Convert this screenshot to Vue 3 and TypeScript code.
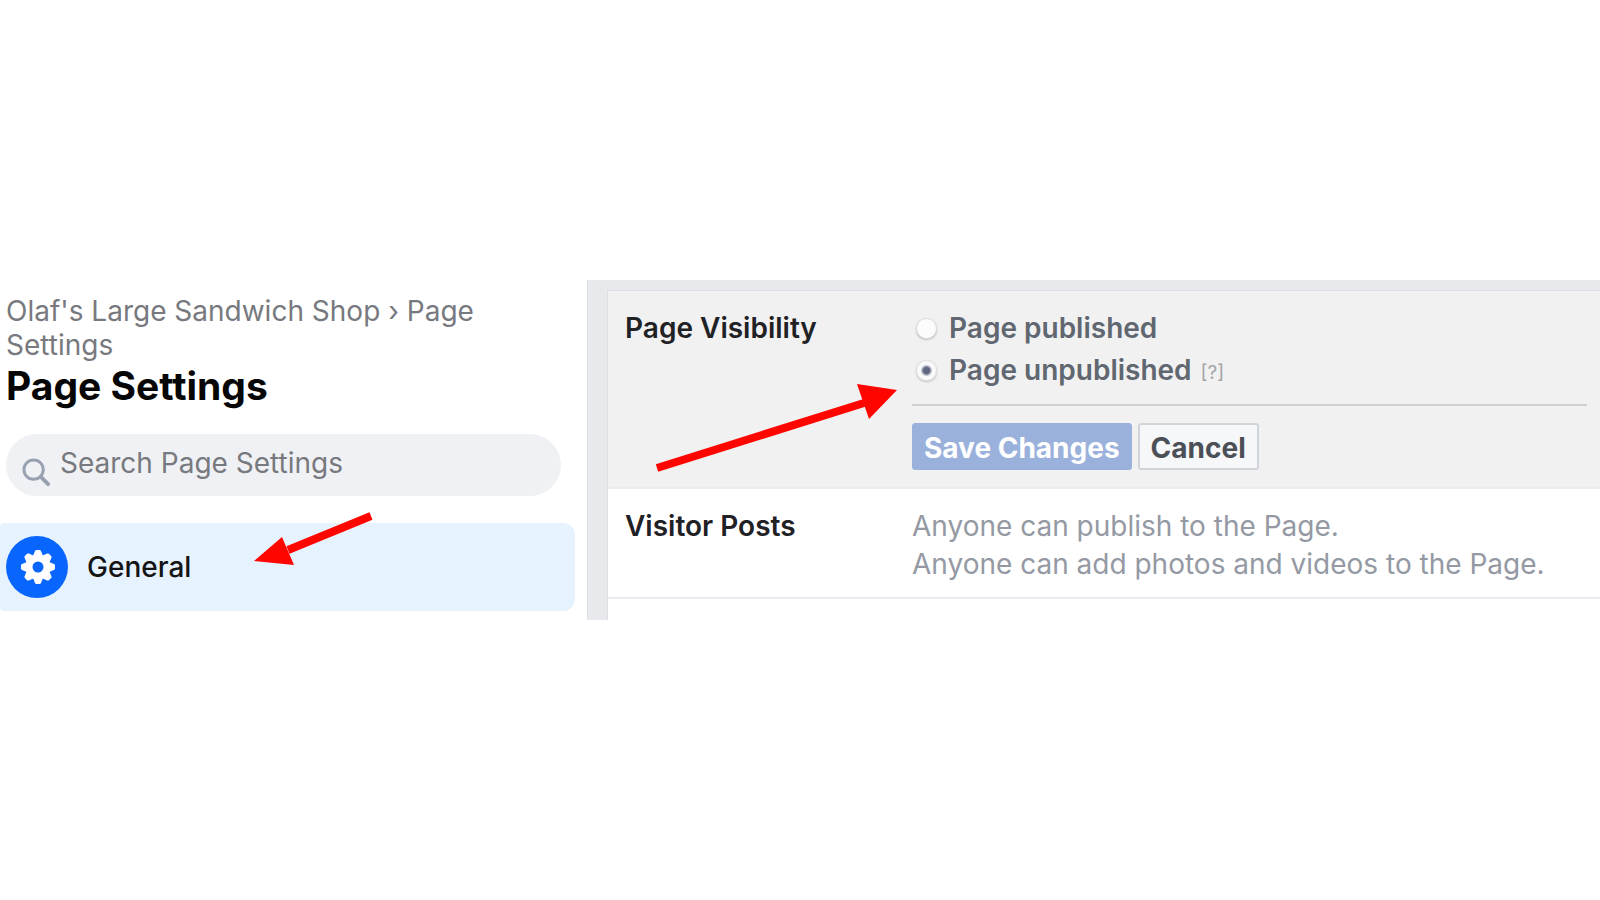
<script setup lang="ts">
import { ref } from 'vue'

type Visibility = 'published' | 'unpublished'

const visibility = ref<Visibility>('unpublished')
const query = ref('')
const options: { value: Visibility; label: string; help: boolean }[] = [
  { value: 'published', label: 'Page published', help: false },
  { value: 'unpublished', label: 'Page unpublished', help: true },
]
const visitorRules = [
  'Anyone can publish to the Page.',
  'Anyone can add photos and videos to the Page.',
]
</script>

<template>
  <div class="page">
    <div class="layout">
      <aside class="sidebar">
        <div class="crumbs">Olaf's Large Sandwich Shop › Page Settings</div>
        <h1 class="title">Page Settings</h1>
        <label class="search">
          <svg class="search-icon" viewBox="0 0 30 30" aria-hidden="true">
            <circle cx="12" cy="12" r="10" />
            <path d="M19.5 19.5 27 27" stroke-width="4" />
          </svg>
          <input v-model="query" type="search" placeholder="Search Page Settings" aria-label="Search Page Settings" />
        </label>
        <a class="nav-item" href="#general">
          <svg class="gear" viewBox="0 0 62 62" aria-hidden="true">
            <circle cx="31" cy="31" r="31" fill="#0866ff" />
            <g fill="#fff" transform="translate(32 31)">
              <circle r="12.5" />
              <path
                v-for="n in 8"
                :key="n"
                :transform="`rotate(${n * 45})`"
                d="M-5-11-3-16Q-2.600-17-1.600-17H1.600Q2.600-17 3-16L5-11Z"
              />
            </g>
            <circle cx="32" cy="31" r="5.500" fill="#0866ff" />
          </svg>
          <span>General</span>
          <svg class="arrow arrow-general" viewBox="0 0 124 56" aria-hidden="true">
            <path d="M117 2 34 36" />
            <polygon points="0,47 28,23 40,51" />
          </svg>
        </a>
      </aside>

      <main class="content">
        <div class="card">
          <section class="row editing">
            <h2 class="name">Page Visibility</h2>
            <form class="value" @submit.prevent>
              <div v-for="o in options" :key="o.value" class="option">
                <label class="choice">
                  <input v-model="visibility" type="radio" name="visibility" :value="o.value" />
                  <span>{{ o.label }}</span>
                </label>
                <a v-if="o.help" class="help" href="#help">[?]</a>
              </div>
              <div class="actions">
                <button class="btn save" type="submit">Save Changes</button>
                <button class="btn cancel" type="button">Cancel</button>
              </div>
            </form>
            <svg class="arrow arrow-visibility" viewBox="0 0 244 90" aria-hidden="true">
              <path d="M1 82 208 17" />
              <polygon points="241,4 201,-2 213,33" />
            </svg>
          </section>
          <section class="row posts">
            <h2 class="name">Visitor Posts</h2>
            <div class="value rules">
              <p v-for="rule in visitorRules" :key="rule">{{ rule }}</p>
            </div>
          </section>
        </div>
      </main>
    </div>
  </div>
</template>

<style>
body {
  margin: 0;
  background: #fff;
}
</style>

<style scoped>
.page {
  min-height: 100vh;
  display: flex;
  flex-direction: column;
  justify-content: center;
  font-family: Inter, "Liberation Sans", sans-serif;
}
.layout {
  display: grid;
  grid-template-columns: 587fr 1013fr;
}
.sidebar {
  padding: 14px 12px 0 0;
}
.crumbs {
  padding: 0 60px 0 6px;
  font-size: 28px;
  line-height: 34px;
  color: #77797e;
}
.title {
  margin: 0;
  padding-left: 6px;
  font-size: 39px;
  line-height: 48px;
  font-weight: 700;
  color: #060606;
}
.search {
  display: flex;
  align-items: center;
  gap: 9px;
  height: 62px;
  box-sizing: border-box;
  margin: 24px 14px 27px 6px;
  padding: 0 16px;
  border-radius: 31px;
  background: #f0f1f4;
}
.search-icon {
  flex: none;
  width: 29px;
  height: 29px;
  margin-top: 14px;
  fill: none;
  stroke: #98a1b1;
  stroke-width: 3;
  stroke-linecap: round;
}
.search input {
  flex: 1;
  min-width: 0;
  padding: 0 0 4px;
  border: 0;
  outline: 0;
  background: transparent;
  font: inherit;
  font-size: 28px;
  line-height: 34px;
  color: #1c1e21;
}
.search input::placeholder {
  color: #77797e;
  opacity: 1;
}
.nav-item {
  position: relative;
  display: flex;
  align-items: center;
  gap: 19px;
  height: 88px;
  padding-left: 6px;
  border-radius: 4px 12px 12px 4px;
  background: #e7f2ff;
  color: #141414;
  font-size: 28px;
  font-weight: 500;
  text-decoration: none;
}
.gear {
  width: 62px;
  height: 62px;
}
.arrow {
  position: absolute;
  overflow: visible;
  fill: #ff0500;
}
.arrow path {
  fill: none;
  stroke: #ff0500;
  stroke-width: 8;
}
.arrow-general {
  left: 254px;
  top: -9px;
  width: 124px;
  height: 56px;
}
.arrow-visibility {
  left: 48px;
  top: 95px;
  width: 244px;
  height: 90px;
}
.content {
  padding: 10px 0 0 19px;
  border-left: 1px solid #dcdfe3;
  background: #e7e9ed;
}
.card {
  padding-bottom: 21px;
  border: 1px solid #dddfe3;
  border-width: 1px 0 0 1px;
  background: #fff;
}
.row {
  position: relative;
  display: grid;
  grid-template-columns: 287px minmax(0, 1fr);
  padding: 0 13px 0 17px;
  border-bottom: 2px solid #e9edf1;
}
.editing {
  padding-top: 16px;
  padding-bottom: 17px;
  background: #f1f1f1;
}
.posts {
  padding-top: 18px;
  padding-bottom: 14px;
}
.name {
  margin: 0;
  font-size: 28px;
  line-height: 42px;
  font-weight: 600;
  color: #1f2125;
}
.option {
  display: flex;
  align-items: center;
  gap: 9px;
  height: 42px;
}
.choice {
  display: flex;
  align-items: center;
  gap: 12px;
  padding-left: 4px;
  font-size: 28px;
  line-height: 42px;
  font-weight: 600;
  color: #606770;
}
.choice input {
  appearance: none;
  width: 21px;
  height: 21px;
  margin: 0;
  border: 1px solid #dcdddf;
  border-radius: 50%;
  background: #fcfcfc;
  box-shadow: 0 1px 2px #bbbdc0;
}
.choice input:checked {
  background: radial-gradient(circle, #5f6680 0 3px, #fafafa 6px);
}
.help {
  padding-top: 4px;
  font-size: 19px;
  color: #a3a5a9;
  text-decoration: none;
}
.actions {
  display: flex;
  gap: 6px;
  margin-top: 13px;
  padding-top: 17px;
  border-top: 2px solid #cfd0d2;
}
.btn {
  height: 47px;
  box-sizing: border-box;
  padding: 3px 11px 0;
  border: 1px solid #9ab1dc;
  border-radius: 3px;
  font-family: inherit;
  font-size: 28px;
  line-height: 34px;
  font-weight: 700;
}
.save {
  background: #9ab1dc;
  color: #fff;
}
.cancel {
  border: 2px solid #d0d5dc;
  background: #f6f7f9;
  color: #4b4f56;
}
.posts .name,
.rules p {
  margin: 0;
  line-height: 38px;
}
.rules {
  font-size: 28px;
  color: #9499a3;
}
</style>
